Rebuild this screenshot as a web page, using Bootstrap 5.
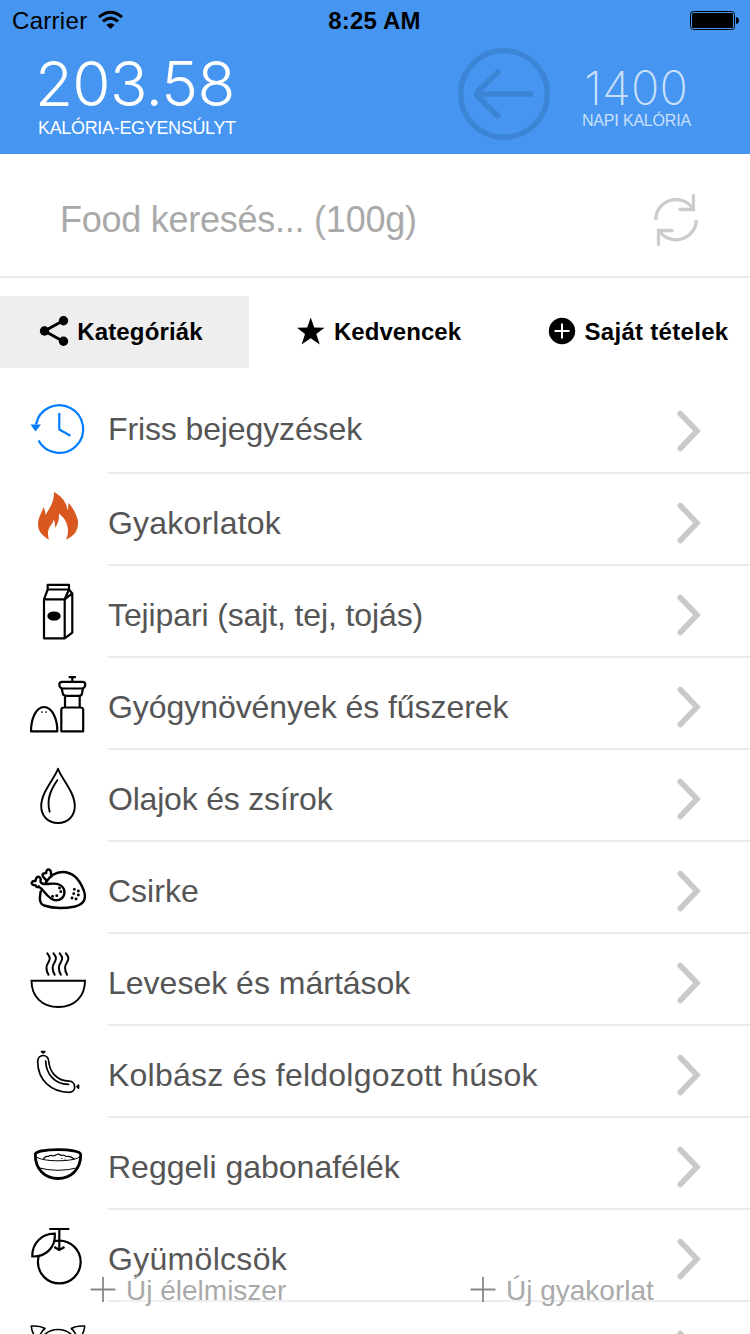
<!DOCTYPE html>
<html lang="hu">
<head>
<meta charset="utf-8">
<meta name="viewport" content="width=device-width, initial-scale=1">
<title>Kalória</title>
<link href="https://cdn.jsdelivr.net/npm/bootstrap@5.3.0/dist/css/bootstrap.min.css" rel="stylesheet">
<style>
body{font-family:"Liberation Sans",Arial,sans-serif;background:#fff;color:#000;height:1334px;overflow:hidden}
.phone{width:750px;height:1334px;overflow:hidden}
svg{display:block;flex:none}
.topbar{background:#4595f1;height:154px}
.status{height:42px;font-size:24px;line-height:42px;padding:0 10px 0 12px}
.status>*{flex:1 1 0}
.carrier{letter-spacing:.3px}
.clock{letter-spacing:.2px;padding-right:3px}
.wifi{margin:-2px 0 0 9px}
.summary{height:112px;color:#fff;padding-left:38px}
.thin{font-family:Inter,"Liberation Sans",sans-serif;font-weight:300}
.balance{width:420px;padding-top:8px}
.balance .thin{font-size:62px;line-height:68px;letter-spacing:-.7px;margin-left:-3px}
.balance .cap{font-size:18px;line-height:20px;letter-spacing:-.33px}
.daily{color:#c9e0fb;width:140px;padding-top:21px;margin-left:32px}
.daily .thin{font-size:47px;line-height:49px;letter-spacing:.2px;margin-left:2px;font-weight:200}
.daily .cap{font-size:16px;line-height:18px;letter-spacing:-.18px}
.search{height:124px;border-bottom:2px solid #ececec;padding:10px 50px 0 60px;font-size:36px;letter-spacing:-.25px;color:#a9a9a9}
.tabs{height:72px;margin-top:18px;font-size:24px}
.tabs>div{width:249px;gap:8px}
.tabs svg{margin:-2px 1px 0 -1px}
.tabs>.third{width:252px;padding-left:29px;letter-spacing:.3px}
.tabs>.second{padding-left:11px;letter-spacing:.05px}
.tabs>.active-tab{background:#eee;padding-right:6px;gap:7px;letter-spacing:.15px}
.list{margin-top:14px}
.item{height:92px}
.item .body{height:92px;border-bottom:2px solid #ececec;margin-left:8px;padding:8px 48px 0 0;font-size:32px;color:#555}
.item:first-child .body{padding-top:4px}
.item .chev{margin-top:-1px}
.item:first-child .chev{margin-top:3px}
.item:nth-child(1),.item:nth-child(3){letter-spacing:-.12px}
.item:nth-child(2){letter-spacing:.2px}
.item:nth-child(4){letter-spacing:-.06px}
.item:nth-child(5){letter-spacing:-.2px}
.item:nth-child(8){letter-spacing:.22px}
.item:nth-child(10){letter-spacing:.3px}
.ic{fill:none;stroke:#000;stroke-width:2.2;stroke-linecap:round;stroke-linejoin:round}
.actions{left:0;right:0;bottom:16px;height:56px;font-size:28px;color:#aaa}
.actions>div{gap:10px;flex:0 0 380px;padding-left:90px;text-shadow:0 0 18px #fff,0 0 30px #f6f6f6}
.actions span{margin-top:2px}
</style>
</head>
<body>
<div class="phone position-relative">
<header class="topbar">
  <div class="status d-flex align-items-center">
    <div class="d-flex align-items-center carrier"><span>Carrier</span>
      <svg class="wifi" width="30" height="20" viewBox="96 10 30 20" fill="none" stroke="#000" stroke-width="3"><path d="M99 17.2Q110.5 7.200 122 17.200"/><path d="M103 21.300Q110.500 15 118 21.300"/><path d="M106.300 24.700Q110.500 21.700 114.700 24.700L110.500 28.900Z" fill="#000" stroke="none"/></svg>
    </div>
    <div class="text-center fw-bold clock">8:25 AM</div>
    <div class="d-flex justify-content-end"><svg width="50" height="20" viewBox="690 11 50 20"><rect x="690.5" y="11.500" width="44" height="18" rx="3" fill="none" stroke="#000"/><rect x="692" y="13" width="41" height="15" rx="1.500"/><path d="M736 17q3 .5 3 3.500t-3 3.500z"/></svg></div>
  </div>
  <div class="summary d-flex">
    <div class="balance"><div class="thin">203.58</div><div class="cap">KALÓRIA-EGYENSÚLYT</div></div>
    <svg style="margin-top:6px" width="92" height="92" viewBox="0 0 92 92" fill="none" stroke="#3c84d6"><circle cx="46" cy="46" r="43.300" stroke-width="5.300"/><path d="M75 46H20M41.500 22.500L20 43.500Q17.500 46 20 48.500L41.500 69.500" stroke-width="5.700"/></svg>
    <div class="daily"><div class="thin">1400</div><div class="cap">NAPI KALÓRIA</div></div>
  </div>
</header>
<div class="search d-flex align-items-center justify-content-between">
  <span>Food keresés... (100g)</span>
  <svg width="48" height="56" viewBox="652 192 48 56" fill="none" stroke="#ccc" stroke-width="3.300" stroke-linecap="round" stroke-linejoin="miter"><path stroke-linecap="butt" d="M655.700 220A20.300 20.300 0 0 1 692.500 208M696.300 220A20.300 20.300 0 0 1 660 232"/><path d="M693.400 195.500V209.500H680M658.500 244.500V230.500H672"/></svg>
</div>
<nav class="tabs d-flex fw-bold">
  <div class="active-tab d-flex align-items-center justify-content-center">
    <svg width="30" height="32" viewBox="39 315 30 32"><path d="M63.500 320.500L44.500 331L63.500 341.500" fill="none" stroke="#000" stroke-width="3"/><circle cx="63.500" cy="320.700" r="4.700"/><circle cx="44.500" cy="331" r="4.700"/><circle cx="63.500" cy="341.300" r="4.700"/></svg><span>Kategóriák</span></div>
  <div class="second d-flex align-items-center justify-content-center">
    <svg width="29" height="30" viewBox="296 316 29 30"><path d="M310.700 317.500L314.300 327.500L324.500 327.700L316.300 334L319.800 344.500L310.700 338.200L301.600 344.500L305 334L297 327.700L307.200 327.500Z"/></svg><span>Kedvencek</span></div>
  <div class="third d-flex align-items-center justify-content-center">
    <svg width="28" height="28" viewBox="548 317 28 28"><circle cx="562" cy="331" r="13.200"/><path d="M554.500 331h15M562 323.500v15" stroke="#fff" stroke-width="2"/></svg><span>Saját tételek</span></div>
</nav>
<main class="list">
  <div class="item d-flex"><svg class="ic" width="100" height="92" viewBox="0 382 100 92"><g style="stroke:#007aff;stroke-linecap:butt"><path d="M36 424.500A23.800 23.800 0 1 1 38.500 440.500M59.300 413V429.500L70.500 435.800"/><path d="M30.500 424.500H41L35.500 431.500Z" fill="#007aff" style="stroke:none"/></g></svg>
    <div class="body flex-grow-1 d-flex align-items-center justify-content-between"><span>Friss bejegyzések</span><svg class="chev" width="26" height="44" viewBox="0 0 26 44"><path d="M4.200 4.500L21 22L4.200 39.500" fill="none" stroke="#c9c9c9" stroke-width="5.500" stroke-linecap="round"/></svg></div></div>
  <div class="item d-flex"><svg width="100" height="92" viewBox="0 474 100 92"><path fill="#d9581f" d="M54 491.700Q67.500 500 67.300 510.500Q68.800 507 68.300 502.700C72.500 507 76.500 514 78 521C78.500 531 74 536 66 539.700C69.500 532 68 526 65.500 521C63.500 517 60 515 59 513.300Q59.500 522 55 528Q55.500 523 53.700 519.300C53 525 47.500 527 48 534Q48 537 49 539.700C41 535 38 530 38 524.500C38 517 42 513 43.300 507.300Q45.600 510 45.300 515C50 508 54 502 54 491.700Z"/></svg>
    <div class="body flex-grow-1 d-flex align-items-center justify-content-between"><span>Gyakorlatok</span><svg class="chev" width="26" height="44" viewBox="0 0 26 44"><path d="M4.200 4.500L21 22L4.200 39.500" fill="none" stroke="#c9c9c9" stroke-width="5.500" stroke-linecap="round"/></svg></div></div>
  <div class="item d-flex"><svg class="ic" width="100" height="92" viewBox="0 566 100 92"><path d="M44 599.300H64.700V638.300H44ZM47.700 584.900H69V589.500H47.700ZM47.700 589.500L44 599.300M69 589.500L64.700 599.300L72 593.700M69 589.500L72.300 593.500V632.700L64.700 638.300"/><ellipse cx="54" cy="616" rx="5.600" ry="3.500" fill="#000"/></svg>
    <div class="body flex-grow-1 d-flex align-items-center justify-content-between"><span>Tejipari (sajt, tej, tojás)</span><svg class="chev" width="26" height="44" viewBox="0 0 26 44"><path d="M4.200 4.500L21 22L4.200 39.500" fill="none" stroke="#c9c9c9" stroke-width="5.500" stroke-linecap="round"/></svg></div></div>
  <div class="item d-flex"><svg class="ic" width="100" height="92" viewBox="0 658 100 92"><path d="M31 731.300C31 719 36 707 44 707S57.500 719 57.300 731.300ZM61.300 731.300V710Q61.300 707.500 64 707.500H80.500Q83.200 707.500 83.200 710V731.300ZM65 707V696H79.700V707M61.700 688.500L62.800 693.500Q63.300 695.800 66 695.800H79Q81.500 695.800 82 693.500L82.900 688.500M62 681.900H82.500Q85.300 682 85.300 684.500Q85 688.500 81.500 688.500H63Q59.600 688.500 59.300 684.500Q59.500 682 62 681.900ZM72.300 681.500V677.300M69.600 677.200H75"/><path d="M41.800 712h.1M46 712h.1" stroke-width="1.700"/></svg>
    <div class="body flex-grow-1 d-flex align-items-center justify-content-between"><span>Gyógynövények és fűszerek</span><svg class="chev" width="26" height="44" viewBox="0 0 26 44"><path d="M4.200 4.500L21 22L4.200 39.500" fill="none" stroke="#c9c9c9" stroke-width="5.500" stroke-linecap="round"/></svg></div></div>
  <div class="item d-flex"><svg class="ic" width="100" height="92" viewBox="0 750 100 92"><path style="stroke-width:1.900" d="M58 768.700C55 778 41.200 792 41.200 806C41.200 816 48 823 58 823S74.800 816 74.800 806C74.800 792 61 778 58 768.700ZM57.300 780.300C50 791 46.500 800 49.700 811.700"/></svg>
    <div class="body flex-grow-1 d-flex align-items-center justify-content-between"><span>Olajok és zsírok</span><svg class="chev" width="26" height="44" viewBox="0 0 26 44"><path d="M4.200 4.500L21 22L4.200 39.500" fill="none" stroke="#c9c9c9" stroke-width="5.500" stroke-linecap="round"/></svg></div></div>
  <div class="item d-flex"><svg class="ic" width="100" height="92" viewBox="0 842 100 92"><path style="stroke-width:2.400" d="M45.500 883C51 874 57 872 62.500 872C74 872 80 880 84 891C86.500 899 84 904 75 906.500C65 908.500 53 908.500 44 905.500C39 903.500 39.500 898 40.700 891.500M43.500 884C50 884.500 54 882.500 59 884.500C66 887.500 65.500 895 61.500 898.500C57 902 51.500 899.500 47.500 895.500C43.500 891.500 42 888.500 38.500 886.500M43.500 884C41.500 883.500 40.500 882.500 40.500 881C41.500 878 39 876 37 877.300C35.500 878.500 36 880.500 35.300 881.200C33 880.500 31.500 882 31.700 883.700C32.500 886 35 885 36 885.500C36 887 37.500 887.800 39 886.500M46.500 880.700C45.500 878.500 42 877 42.500 874.500C43.500 872.500 45.500 873.700 46.200 873C46 870.500 47.500 869 49.500 869.700C52 871 50.500 874 51.300 876.500"/><path style="stroke-width:2.800" d="M59.500 888h.1M60.800 891.700h.1M56.700 895.700h.1M52.500 896.300h.1M74.300 889.300h.1M78.300 891h.1M73.700 893.700h.1M78.300 895h.1M72 898h.1M76 899h.1"/></svg>
    <div class="body flex-grow-1 d-flex align-items-center justify-content-between"><span>Csirke</span><svg class="chev" width="26" height="44" viewBox="0 0 26 44"><path d="M4.200 4.500L21 22L4.200 39.500" fill="none" stroke="#c9c9c9" stroke-width="5.500" stroke-linecap="round"/></svg></div></div>
  <div class="item d-flex"><svg class="ic" width="100" height="92" viewBox="0 934 100 92"><path style="stroke-width:1.900;stroke-linejoin:miter" d="M31.500 980.700H85C85 996 75 1007 58.300 1007S31.500 996 31.500 980.700Z"/><path style="stroke-width:2" d="M47.300 953.300C50.300 957 50.500 959 48.300 962.500C45.500 966.500 45.700 970 48.500 974.700M53.500 953.300C56.500 957 56.700 959 54.500 962.500C51.700 966.500 51.900 970 54.700 974.700M59.700 953.300C62.700 957 62.900 959 60.700 962.500C57.900 966.500 58.100 970 60.900 974.700M65.900 953.300C68.900 957 69.100 959 66.900 962.500C64.100 966.500 64.300 970 67.100 974.700"/></svg>
    <div class="body flex-grow-1 d-flex align-items-center justify-content-between"><span>Levesek és mártások</span><svg class="chev" width="26" height="44" viewBox="0 0 26 44"><path d="M4.200 4.500L21 22L4.200 39.500" fill="none" stroke="#c9c9c9" stroke-width="5.500" stroke-linecap="round"/></svg></div></div>
  <div class="item d-flex"><svg class="ic" width="100" height="92" viewBox="0 1026 100 92"><path style="stroke-width:1.700" d="M37.700 1062C37.500 1053.500 48.500 1053.500 48.700 1061C49.500 1072 57 1081 69 1081.200C76.500 1081.500 76.500 1092 69.500 1092.400C51 1092.500 38 1080 37.700 1062ZM45.700 1061C46 1074 55 1084.500 68.500 1084.300M41.500 1051.600L43 1053L44.800 1051.600ZM78.500 1085L77 1086.700L78.500 1088.200Z"/></svg>
    <div class="body flex-grow-1 d-flex align-items-center justify-content-between"><span>Kolbász és feldolgozott húsok</span><svg class="chev" width="26" height="44" viewBox="0 0 26 44"><path d="M4.200 4.500L21 22L4.200 39.500" fill="none" stroke="#c9c9c9" stroke-width="5.500" stroke-linecap="round"/></svg></div></div>
  <div class="item d-flex"><svg class="ic" width="100" height="92" viewBox="0 1118 100 92"><path style="stroke-width:2.800" d="M35.300 1154.500C35.300 1148 80.700 1148 80.700 1154.500C81 1169 71 1178.500 58 1178.500S35 1169 35.300 1154.500Z"/><path style="stroke-width:1" d="M35.500 1156C38 1162.500 78 1162.500 80.500 1156M38 1167.700Q58 1173 78 1167.700"/><path style="stroke-width:1.200" d="M43.500 1159Q45 1155.500 48.500 1156.500Q50 1154.500 53 1156Q55 1155.500 57 1154.500Q58.500 1153.500 61 1155.500Q64 1154.500 66 1156.500Q71 1155.500 74 1159M62 1158.500h.1M65 1159h.1"/></svg>
    <div class="body flex-grow-1 d-flex align-items-center justify-content-between"><span>Reggeli gabonafélék</span><svg class="chev" width="26" height="44" viewBox="0 0 26 44"><path d="M4.200 4.500L21 22L4.200 39.500" fill="none" stroke="#c9c9c9" stroke-width="5.500" stroke-linecap="round"/></svg></div></div>
  <div class="item d-flex"><svg class="ic" width="100" height="92" viewBox="0 1210 100 92"><g style="stroke-linecap:butt;stroke-linejoin:miter"><circle cx="59.300" cy="1262" r="21.400"/><path fill="#fff" d="M54.800 1233.700C42 1233.500 32 1243 32.300 1256.500C45 1257 56 1248 54.800 1233.700Z"/><path d="M49.300 1229H69.300M59.300 1229V1250M54.300 1247L59.300 1250L64.500 1247"/></g></svg>
    <div class="body flex-grow-1 d-flex align-items-center justify-content-between"><span>Gyümölcsök</span><svg class="chev" width="26" height="44" viewBox="0 0 26 44"><path d="M4.200 4.500L21 22L4.200 39.500" fill="none" stroke="#c9c9c9" stroke-width="5.500" stroke-linecap="round"/></svg></div></div>
  <div class="item d-flex"><svg class="ic" width="100" height="92" viewBox="0 1302 100 92"><path style="stroke-width:1.600" d="M45 1328.500Q40 1325.500 31.300 1326Q31.500 1332 36 1338M71.300 1328.500Q76 1325.500 84.700 1326Q84.500 1332 80 1338M45 1328.500Q41.500 1331 40 1335M71.300 1328.500Q74.500 1331 76 1335M44 1335Q50 1329.500 58 1329.500T72 1335"/></svg>
    <div class="body flex-grow-1 d-flex align-items-center justify-content-end"><svg class="chev" width="26" height="44" viewBox="0 0 26 44"><path d="M4.200 4.500L21 22L4.200 39.500" fill="none" stroke="#c9c9c9" stroke-width="5.500" stroke-linecap="round"/></svg></div></div>
</main>
<footer class="actions position-absolute d-flex">
  <div class="d-flex align-items-center"><svg width="26" height="26" viewBox="0 0 26 26"><path d="M.5 12.500H25.500M13 0V25" stroke="#888" stroke-width="1.800"/></svg><span>Új élelmiszer</span></div>
  <div class="d-flex align-items-center"><svg width="26" height="26" viewBox="0 0 26 26"><path d="M.5 12.500H25.500M13 0V25" stroke="#888" stroke-width="1.800"/></svg><span>Új gyakorlat</span></div>
</footer>
</div>
<script src="https://cdn.jsdelivr.net/npm/bootstrap@5.3.0/dist/js/bootstrap.bundle.min.js"></script>
</body>
</html>
